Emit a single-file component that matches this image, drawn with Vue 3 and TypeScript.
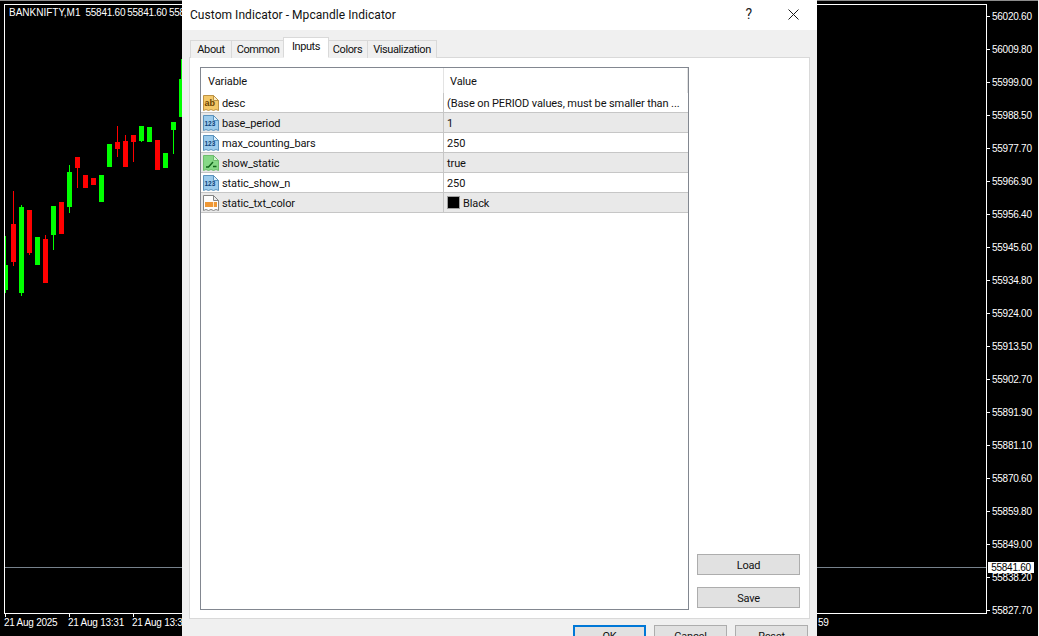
<script setup lang="ts">
type Candle = { x: number; top: number; bottom: number; hi?: number; lo?: number; wx?: number; up: boolean };

const candles: Candle[] = [
  { x: 5, top: 265, bottom: 290, hi: 236, lo: 293, wx: 5, up: true },
  { x: 11, top: 224, bottom: 262, hi: 191, lo: 266, up: false },
  { x: 19, top: 207, bottom: 293, hi: 205, lo: 296, up: true },
  { x: 27, top: 210, bottom: 253, lo: 255, up: false },
  { x: 35, top: 237, bottom: 265, up: true },
  { x: 43, top: 239, bottom: 283, hi: 235, up: false },
  { x: 51, top: 206, bottom: 235, lo: 250, up: true },
  { x: 59, top: 202, bottom: 234, up: false },
  { x: 67, top: 172, bottom: 207, hi: 165, lo: 213, up: true },
  { x: 75, top: 157, bottom: 168, lo: 188, up: false },
  { x: 83, top: 175, bottom: 188, up: false },
  { x: 91, top: 178, bottom: 185, up: false },
  { x: 99, top: 175, bottom: 202, up: true },
  { x: 107, top: 144, bottom: 167, up: true },
  { x: 115, top: 142, bottom: 149, hi: 126, lo: 157, up: false },
  { x: 123, top: 141, bottom: 167, hi: 135, up: false },
  { x: 131, top: 135, bottom: 142, lo: 162, up: false },
  { x: 139, top: 126, bottom: 141, lo: 142, up: true },
  { x: 147, top: 127, bottom: 142, up: true },
  { x: 155, top: 140, bottom: 170, up: false },
  { x: 163, top: 153, bottom: 168, up: true },
  { x: 171, top: 122, bottom: 130, lo: 154, up: true },
  { x: 179, top: 79, bottom: 117, hi: 59, up: true },
];

const PLOT_X = 5;
const PLOT_Y = 5;

function bodyStyle(c: Candle) {
  return {
    left: `${c.x - PLOT_X}px`,
    top: `${c.top - PLOT_Y}px`,
    height: `${c.bottom - c.top}px`,
    width: c.wx !== undefined ? '3px' : '5px',
  };
}
function wickStyle(c: Candle) {
  const hi = c.hi ?? c.top;
  const lo = c.lo ?? c.bottom;
  const x = c.wx ?? c.x + 2;
  return { left: `${x - PLOT_X}px`, top: `${hi - PLOT_Y}px`, height: `${lo - hi}px` };
}

const prices = [
  '56020.60', '56009.80', '55999.00', '55988.50', '55977.70', '55966.90', '55956.40',
  '55945.60', '55934.80', '55924.00', '55913.50', '55902.70', '55891.90', '55881.10',
  '55870.60', '55859.80', '55849.00', '55838.20', '55827.70',
];

const times = ['21 Aug 2025', '21 Aug 13:31', '21 Aug 13:33'];

type Row = { name: string; value: string; icon: 'ab' | 'num' | 'bool' | 'color'; swatch?: boolean };
const rows: Row[] = [
  { name: 'desc', value: '(Base on PERIOD values, must be smaller than ...', icon: 'ab' },
  { name: 'base_period', value: '1', icon: 'num' },
  { name: 'max_counting_bars', value: '250', icon: 'num' },
  { name: 'show_static', value: 'true', icon: 'bool' },
  { name: 'static_show_n', value: '250', icon: 'num' },
  { name: 'static_txt_color', value: 'Black', icon: 'color', swatch: true },
];

const tabs = [
  { label: 'About', width: 42 },
  { label: 'Common', width: 54 },
  { label: 'Inputs', width: 46 },
  { label: 'Colors', width: 41 },
  { label: 'Visualization', width: 70 },
];
const iconColors: Record<Row['icon'], { fill: string; stroke: string; fold: string }> = {
  ab: { fill: '#f4c869', stroke: '#bd9346', fold: '#fdeec6' },
  num: { fill: '#9ccbec', stroke: '#5b93bd', fold: '#dff0fb' },
  bool: { fill: '#86d886', stroke: '#6dbb6d', fold: '#d6f3d6' },
  color: { fill: '#fdfdfd', stroke: '#858585', fold: '#ececec' },
};
const outline = 'M0.5 0.5H10.5L15.5 5.5V15.5L13 14.5L10.5 15.5L8 14.5L5.5 15.5L3 14.5L0.5 15.5Z';
</script>

<template>
  <div class="page">
    <div class="frame-top"></div>
    <div class="frame-right"></div>

    <div class="chart">
      <div class="plot">
        <span class="symbol"><span class="symbol-name">BANKNIFTY,M1</span><span>55841.60</span><span>55841.60</span><span>55841.60</span></span>
        <template v-for="(c, i) in candles" :key="i">
          <i v-if="c.hi !== undefined || c.lo !== undefined" class="wick" :class="c.up ? 'up' : 'down'" :style="wickStyle(c)"></i>
          <i class="body" :class="c.up ? 'up' : 'down'" :style="bodyStyle(c)"></i>
        </template>
        <div class="bid-line"></div>
      </div>
      <div class="price-axis">
        <span v-for="p in prices" :key="p" class="price">{{ p }}</span>
      </div>
      <div class="bid-tag">55841.60</div>
      <div class="time-axis">
        <span v-for="t in times" :key="t" class="time">{{ t }}</span>
      </div>
      <span class="time-tail">59</span>
    </div>

    <section class="dialog">
      <header class="titlebar">
        <span class="title">Custom Indicator - Mpcandle Indicator</span>
        <div class="title-actions">
          <span class="help">?</span>
          <svg class="close" width="11" height="11" viewBox="0 0 11 11">
            <path d="M0.5 0.5L10.5 10.5M10.5 0.5L0.5 10.5" stroke="#1a1a1a" stroke-width="1" fill="none" />
          </svg>
        </div>
      </header>

      <div class="content">
        <nav class="tabs">
          <span
            v-for="t in tabs"
            :key="t.label"
            class="tab"
            :class="{ active: t.label === 'Inputs' }"
            :style="{ width: `${t.width}px` }"
          >{{ t.label }}</span>
        </nav>

        <div class="panel">
          <div class="grid">
            <div class="row head">
              <div class="cell name-cell">Variable</div>
              <div class="cell value-cell">Value</div>
            </div>
            <div v-for="(r, i) in rows" :key="r.name" class="row" :class="{ alt: i % 2 === 1 }">
              <div class="cell name-cell">
                <svg class="icon" width="16" height="16" viewBox="0 0 16 16">
                  <path :d="outline" :fill="iconColors[r.icon].fill" :stroke="iconColors[r.icon].stroke" stroke-width="1" />
                  <path d="M10.5 0.5V5.5H15.5Z" :fill="iconColors[r.icon].fold" :stroke="iconColors[r.icon].stroke" stroke-width="1" />
                  <text v-if="r.icon === 'ab'" x="1.5" y="11" class="ic-ab">ab</text>
                  <text v-else-if="r.icon === 'num'" x="1.5" y="11" class="ic-num">123</text>
                  <path v-else-if="r.icon === 'bool'" d="M3 12H5.5L10 7M10 11.5H13.5" stroke="#11631a" stroke-width="1.4" fill="none" />
                  <template v-else>
                    <rect x="2" y="7" width="12" height="5" fill="#ee9735" />
                    <rect x="10" y="7" width="1" height="5" fill="#ffe2bd" />
                  </template>
                </svg>
                <span class="cell-text">{{ r.name }}</span>
              </div>
              <div class="cell value-cell data">
                <i v-if="r.swatch" class="swatch"></i>
                <span class="cell-text">{{ r.value }}</span>
              </div>
            </div>
          </div>

          <aside class="side">
            <button class="btn side-btn" type="button">Load</button>
            <button class="btn side-btn" type="button">Save</button>
          </aside>
        </div>

        <footer class="footer">
          <button class="btn foot-btn primary" type="button">OK</button>
          <button class="btn foot-btn" type="button">Cancel</button>
          <button class="btn foot-btn" type="button">Reset</button>
        </footer>
      </div>
    </section>
  </div>
</template>

<style>
html, body { margin: 0; background: #000; overflow: hidden; }
</style>

<style scoped>
.page {
  position: relative;
  width: 1039px;
  height: 636px;
  background: #000;
  overflow: hidden;
  font-family: Roboto, "Noto Sans", sans-serif;
}
.frame-top { position: absolute; left: 0; right: 0; top: 0; height: 1px; background: #8c8c8c; }
.frame-right { position: absolute; right: 0; top: 0; bottom: 0; width: 1px; background: #f0f0f0; }

.chart {
  position: absolute;
  inset: 0;
  font-family: "Liberation Sans", sans-serif;
  font-size: 10px;
  letter-spacing: -0.25px;
  color: #fff;
}
.plot {
  position: absolute;
  left: 4px;
  top: 4px;
  width: 983px;
  height: 610px;
  box-sizing: border-box;
  border: 1px solid #fff;
}
.symbol {
  position: absolute;
  left: 4px;
  top: 1px;
  display: flex;
  gap: 2px;
  white-space: nowrap;
  line-height: 14px;
}
.symbol-name { letter-spacing: 0; margin-right: 3px; }
.body, .wick { position: absolute; display: block; }
.wick { width: 1px; }
.up { background: #00ff00; }
.down { background: #ff0000; }
.bid-line {
  position: absolute;
  left: 0;
  right: 0;
  top: 562px;
  height: 1px;
  background: #77828c;
}
.price-axis {
  position: absolute;
  left: 987px;
  top: 0;
  display: flex;
  flex-direction: column;
}
.price {
  position: relative;
  height: 33px;
  line-height: 34px;
  padding-left: 5px;
  white-space: nowrap;
}
.price::before {
  content: "";
  position: absolute;
  left: 0;
  top: 16px;
  width: 3px;
  height: 1px;
  background: #fff;
}
.bid-tag {
  position: absolute;
  left: 988px;
  top: 562px;
  width: 46px;
  height: 11px;
  line-height: 11px;
  background: #fff;
  color: #000;
  text-align: center;
}
.time-axis {
  position: absolute;
  left: 5px;
  top: 614px;
  display: flex;
}
.time {
  position: relative;
  width: 64px;
  padding-top: 2px;
  line-height: 14px;
  white-space: nowrap;
  text-indent: -1px;
}
.time::before {
  content: "";
  position: absolute;
  left: 0;
  top: 0;
  width: 1px;
  height: 3px;
  background: #fff;
}
.time-tail {
  position: absolute;
  left: 818px;
  top: 616px;
  line-height: 14px;
}

.dialog {
  position: absolute;
  left: 182px;
  top: 0;
  width: 635px;
  height: 660px;
  display: flex;
  flex-direction: column;
  background: #f0f0f0;
}
.titlebar {
  height: 30px;
  flex: none;
  background: #fff;
  display: flex;
  align-items: center;
  justify-content: space-between;
  padding: 0 18px 0 8px;
}
.title { font-size: 12px; letter-spacing: 0.05px; color: #111; }
.title-actions { display: flex; align-items: center; gap: 36px; margin-bottom: 2px; }
.help { font-size: 14px; line-height: 14px; color: #222; }
.close { display: block; }

.content {
  flex: 1;
  display: flex;
  flex-direction: column;
  padding: 7px 7px 0 7px;
  min-height: 0;
}
.tabs {
  display: flex;
  align-items: flex-end;
  height: 21px;
  padding-left: 1px;
  position: relative;
  z-index: 1;
  margin-bottom: -1px;
}
.tab {
  height: 18px;
  line-height: 17px;
  box-sizing: border-box;
  text-align: center;
  border: 1px solid #d9d9d9;
  border-bottom: 0;
  margin-left: -1px;
  font-size: 11px;
  letter-spacing: -0.4px;
  color: #111;
  background: #f0f0f0;
}
.tab:first-child { margin-left: 0; }
.tab.active {
  height: 21px;
  line-height: 18px;
  margin: 0 -1px 0 -2px;
  background: #fff;
  border-bottom: 1px solid #fff;
  position: relative;
  z-index: 2;
}
.panel {
  height: 562px;
  flex: none;
  box-sizing: border-box;
  background: #fff;
  border: 1px solid #d9d9d9;
  padding: 9px 9px 8px 10px;
  display: flex;
  gap: 8px;
}
.grid {
  width: 489px;
  flex: none;
  box-sizing: border-box;
  border: 1px solid #828790;
  font-size: 11px;
  letter-spacing: -0.1px;
  color: #111;
}
.row {
  display: flex;
  height: 20px;
  box-sizing: border-box;
  border-bottom: 1px solid #c6c6c6;
  line-height: 19px;
}
.row.head {
  height: 25px;
  border-bottom: 0;
}
.head .cell { padding-top: 2px; }
.row.alt { background: #e9e9e9; }
.cell { white-space: nowrap; overflow: hidden; }
.cell-text { position: relative; top: 1px; }
.name-cell {
  width: 243px;
  flex: none;
  box-sizing: border-box;
  display: flex;
  align-items: center;
  gap: 3px;
  padding-left: 2px;
  border-right: 1px solid #c6c6c6;
}
.head .name-cell { padding-left: 7px; border-right-color: #e3e3e3; }
.value-cell { flex: 1; box-sizing: border-box; padding-left: 3px; display: flex; align-items: center; gap: 3px; }
.head .value-cell { padding-left: 6px; border-right: 1px solid #e3e3e3; }
.icon { flex: none; display: block; }
.ic-ab { font: 700 9px "Liberation Sans", sans-serif; letter-spacing: 0; fill: #6b4300; }
.ic-num { font: 700 6.5px "Liberation Sans", sans-serif; letter-spacing: 0; fill: #0c3f78; }
.swatch {
  width: 13px;
  height: 13px;
  flex: none;
  box-sizing: border-box;
  background: #000;
  border: 1px solid #a0a0a0;
  display: block;
}
.side {
  flex: 1;
  display: flex;
  flex-direction: column;
  justify-content: flex-end;
  gap: 12px;
  padding-bottom: 2px;
  width: 103px;
}
.btn {
  font-family: inherit;
  font-size: 11px;
  letter-spacing: -0.2px;
  color: #111;
  background: #e1e1e1;
  border: 1px solid #adadad;
  padding: 0;
  margin: 0;
  box-sizing: border-box;
}
.side-btn { width: 103px; height: 21px; padding-top: 1px; }
.footer {
  display: flex;
  justify-content: flex-end;
  gap: 8px;
  padding: 6px 2px 0 0;
}
.foot-btn { width: 73px; height: 23px; }
.foot-btn.primary { border: 2px solid #0078d7; }
</style>
